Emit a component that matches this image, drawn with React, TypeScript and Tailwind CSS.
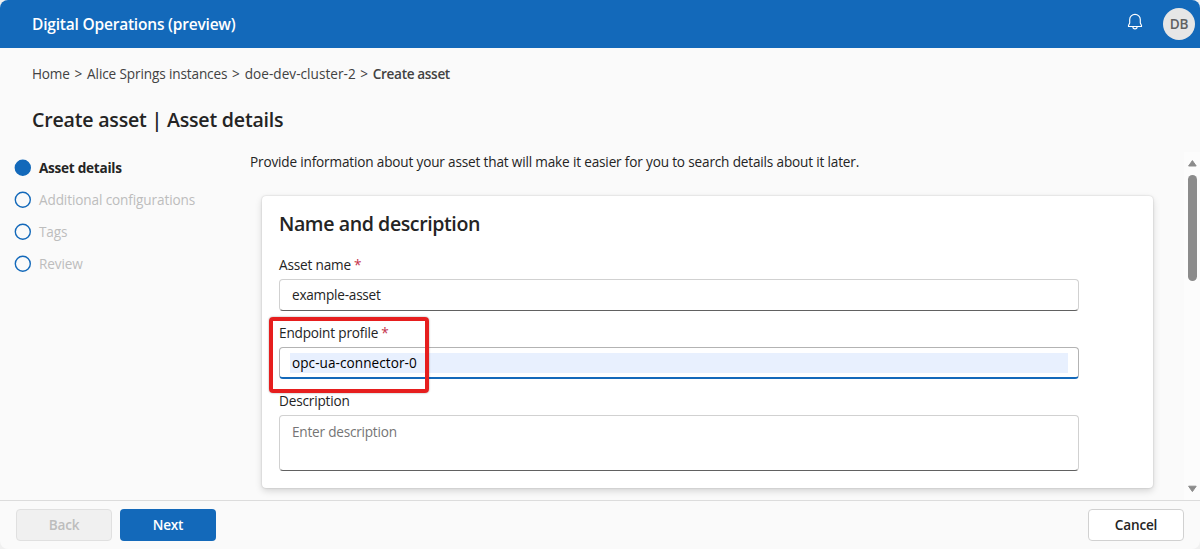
import type { ReactNode } from 'react';

const steps = ['Additional configurations', 'Tags', 'Review'];

function Label({ children, required }: { children: ReactNode; required?: boolean }) {
  return (
    <label className="block h-[28px] pt-[4px] leading-[20px]">
      {children}
      {required && <span className="ml-[3px] text-[#c4314b]">*</span>}
    </label>
  );
}

function BellIcon() {
  return (
    <svg width="16" height="18" viewBox="0 0 16 18" fill="none" stroke="white" strokeWidth="1.15" strokeLinejoin="round" strokeLinecap="round">
      <path d="M2.7 6.4a5.3 5 0 0 1 10.6 0V10l1.2 2.5v1h-13v-1L2.7 10z" />
      <path d="M5.9 13.8a2.1 2.1 0 0 0 4.2 0" />
    </svg>
  );
}

function StepMark({ filled }: { filled?: boolean }) {
  return (
    <svg className="-mt-px" width="17" height="17" viewBox="0 0 17 17" fill={filled ? '#1369ba' : 'none'} stroke="#1369ba" strokeWidth="1.4">
      <circle cx="8.8" cy="8.8" r="7.5" />
    </svg>
  );
}

export default function App() {
  return (
    <div className="h-[549px] w-[1200px] bg-[#f0f0f0]">
      <div className="flex h-[549px] w-[1200px] flex-col overflow-hidden rounded-[8px] bg-[#fafafa] font-['Open_Sans','Noto_Sans',sans-serif] text-[13.6px] tracking-[-0.17px] text-[#242424]">
        <header className="flex h-[48px] shrink-0 items-center bg-[#1369ba] pl-[32px] pr-[5px] text-white">
          <h1 className="pt-[2px] text-[15.5px] font-semibold tracking-[-0.2px]">Digital Operations (preview)</h1>
          <div className="-mt-[4px] ml-auto mr-[20px]">
            <BellIcon />
          </div>
          <div className="flex size-[32px] items-center justify-center rounded-full bg-[#e6e6e6] font-semibold text-[#616161]">DB</div>
        </header>

        <nav className="flex h-[52px] shrink-0 items-center gap-[5px] pl-[32px] pt-px text-[#424242]">
          <span className="w-[37.5px]">Home</span>
          <span>&gt;</span>
          <span className="w-[140px] whitespace-nowrap tracking-[-0.13px]">Alice Springs instances</span>
          <span>&gt;</span>
          <span className="w-[110.5px] whitespace-nowrap tracking-[0.03px]">doe-dev-cluster-2</span>
          <span>&gt;</span>
          <span className="font-semibold tracking-[-0.35px]">Create asset</span>
        </nav>
        <h2 className="h-[52px] shrink-0 pl-[32px] pt-[6px] text-[19.6px] font-[560] leading-[28px] tracking-[-0.21px]">Create asset | Asset details</h2>

        <div className="flex min-h-0 flex-1">
          <ol className="w-[250px] shrink-0 pl-[14px]">
            <li className="flex h-[32px] items-center gap-[8px] font-bold tracking-[-0.27px]">
              <StepMark filled />
              <span className="pt-px">Asset details</span>
            </li>
            {steps.map((label) => (
              <li key={label} className="flex h-[32px] items-center gap-[8px] text-[#bdbdbd]">
                <StepMark />
                <span className="pt-px tracking-[-0.12px]">{label}</span>
              </li>
            ))}
          </ol>

          <main className="w-[934px] shrink-0 overflow-hidden">
            <p className="h-[44px] leading-[20px]">Provide information about your asset that will make it easier for you to search details about it later.</p>
            <section className="ml-[12px] h-[292px] w-[891px] rounded-[4px] bg-white pl-[17px] shadow-[0_0_2px_rgba(0,0,0,0.2),0_3px_7px_rgba(0,0,0,0.15)]">
              <h3 className="h-[55px] pt-[14px] text-[19.6px] font-[560] leading-[28px] tracking-[-0.42px]">Name and description</h3>
              <Label required>Asset name</Label>
              <div className="mb-[8px] flex h-[32px] w-[800px] items-center rounded-[4px] border border-[#d1d1d1] border-b-[#616161] pl-[12px] tracking-[-0.23px]">example-asset</div>
              <div className="relative">
                <Label required>Endpoint profile</Label>
                <div className="mb-[8px] flex h-[32px] w-[800px] items-center overflow-hidden rounded-[4px] border border-b-2 border-[#b3b3b3] border-b-[#1369ba] px-[10px] text-black">
                  <div className="flex h-[20px] w-full items-center bg-[#e8f0fe] pl-[2px] pt-px tracking-[0.05px]">opc-ua-connector-0</div>
                </div>
                <div className="absolute -left-[10px] -top-[2px] h-[76px] w-[160px] rounded-[4px] border-4 border-[#e61e1e] shadow-[0_0_2px_rgba(0,0,0,0.4)]" />
              </div>
              <Label>Description</Label>
              <div className="h-[56px] w-[800px] rounded-[4px] border border-[#d1d1d1] border-b-[#616161] pl-[12px] pt-[6px] leading-[20px] tracking-[-0.22px] text-[#757575]">Enter description</div>
            </section>
          </main>

          <div className="flex w-[16px] flex-col items-center bg-[#fcfcfc] pb-[7px] pt-[7px]">
            <svg width="10" height="8" viewBox="0 0 10 8" fill="#8b8b8b" stroke="#8b8b8b" strokeLinejoin="round"><path d="M5.4 1.6 9.2 7H1.6z" /></svg>
            <div className="mt-[8px] h-[106px] w-[9px] rounded-full bg-[#8b8b8b]" />
            <svg className="mt-auto" width="10" height="8" viewBox="0 0 10 8" fill="#8b8b8b" stroke="#8b8b8b" strokeLinejoin="round"><path d="M5.4 6.6 1.6 1.2h7.6z" /></svg>
          </div>
        </div>

        <footer className="flex h-[49px] shrink-0 gap-[8px] border-t border-[#dcdcdc] px-[16px] pt-[8px] font-semibold">
          <button className="h-[32px] w-[96px] rounded-[4px] border border-[#e0e0e0] bg-[#f0f0f0] pt-px text-[#bdbdbd]">Back</button>
          <button className="h-[32px] w-[96px] rounded-[4px] bg-[#1369ba] pt-px text-white">Next</button>
          <button className="ml-auto h-[32px] w-[96px] rounded-[4px] border border-[#d1d1d1] bg-white pt-px">Cancel</button>
        </footer>
      </div>
    </div>
  );
}
